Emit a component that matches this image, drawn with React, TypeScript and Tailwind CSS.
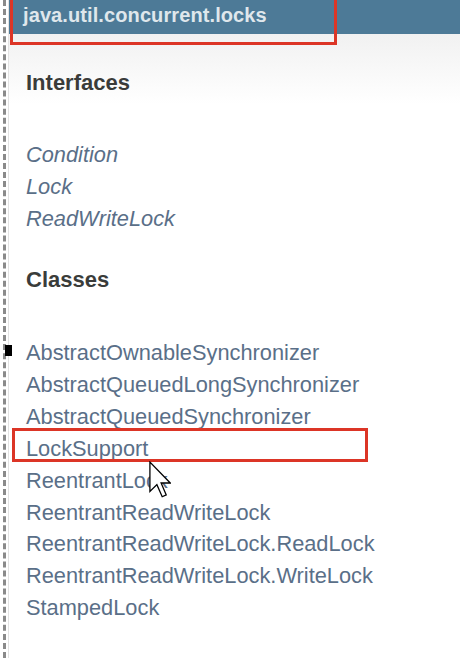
import React from "react";

const interfaces = ["Condition", "Lock", "ReadWriteLock"];
const classes = [
  "AbstractOwnableSynchronizer",
  "AbstractQueuedLongSynchronizer",
  "AbstractQueuedSynchronizer",
  "LockSupport",
  "ReentrantLock",
  "ReentrantReadWriteLock",
  "ReentrantReadWriteLock.ReadLock",
  "ReentrantReadWriteLock.WriteLock",
  "StampedLock",
];

export default function App() {
  return (
    <div
      className="relative w-[460px] h-[658px] overflow-hidden bg-white flex"
      style={{ fontFamily: '"Liberation Sans", Arial, Helvetica, sans-serif' }}
    >
      {/* left frame rail */}
      <div className="w-[3px] shrink-0" />
      <div className="w-[3px] shrink-0 border-l-[3px] border-dashed border-[#8a8a8a]" />
      <div className="w-[2px] shrink-0" />
      <div className="w-[1px] shrink-0 bg-[#e2e2e2]" />

      <div className="flex-1 flex flex-col">
        <div className="h-[34px] bg-[#4d7a97] pl-[14px] pb-[4px] flex items-center">
          <span className="text-[20px] font-bold text-[#dfe7ec] leading-[30px] tracking-[0.1px]">
            java.util.concurrent.locks
          </span>
        </div>
        <div className="flex-1 bg-gradient-to-b from-[#f1f1f1] via-white via-[70px] to-white pl-[17px]">
          <div className="mt-[33px] text-[22px] font-bold text-[#3a3c3a] leading-[32px]">Interfaces</div>
          <ul className="mt-[40px]">
            {interfaces.map((n) => (
              <li key={n} className="text-[21.8px] italic text-[#5a6f88] leading-[32px]">
                {n}
              </li>
            ))}
          </ul>
          <div className="mt-[29px] text-[22px] font-bold text-[#3a3c3a] leading-[32px]">Classes</div>
          <ul className="mt-[41px]">
            {classes.map((n) => (
              <li key={n} className="relative text-[21.8px] text-[#5a6f88] leading-[31.9px]">
                {n}
                {n === "LockSupport" && (
                  <span className="absolute left-[-14px] top-[-5px] w-[356px] h-[34px] border-[3px] border-[#dc3526]" />
                )}
              </li>
            ))}
          </ul>
        </div>
      </div>

      {/* red highlight around header */}
      <div className="absolute left-[10px] top-[-6px] w-[327px] h-[51px] border-[3px] border-[#dc3526]" />

      {/* small black marker */}
      <div className="absolute left-[5px] top-[345px] w-[7px] h-[11px] bg-black" />

      {/* mouse cursor */}
      <svg
        className="absolute left-[149px] top-[461px]"
        width="22"
        height="37"
        viewBox="0 0 12 20"
      >
        <path
          d="M0.5 0.5 L0.5 16.5 L4.3 12.8 L7.2 19.4 L9.4 18.4 L6.6 11.9 L11.6 11.9 Z"
          fill="white"
          stroke="black"
          strokeWidth="0.7"
          strokeLinejoin="miter"
        />
      </svg>
    </div>
  );
}
